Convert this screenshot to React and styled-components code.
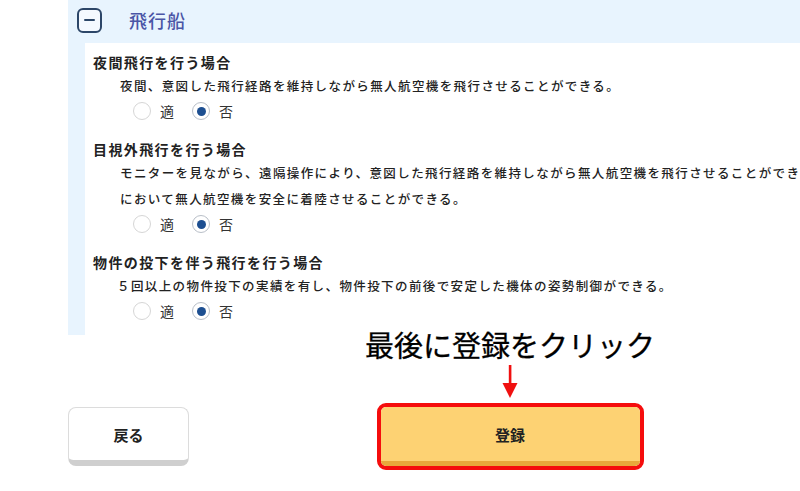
import React from "react";
import styled, { createGlobalStyle } from "styled-components";

const Global = createGlobalStyle`
  html, body {
    margin: 0;
    padding: 0;
    background: #ffffff;
    overflow: hidden;
  }
  body {
    font-family: "Noto Sans CJK JP", "Noto Sans", sans-serif;
    color: #222;
  }
`;

const Page = styled.div`
  width: 800px;
  height: 491px;
  padding-left: 68px;
  box-sizing: border-box;
  overflow: hidden;
`;

const Panel = styled.section`
  background: #e8f4fe;
  width: 732px;
  height: 335px;
  display: flex;
  flex-direction: column;
`;

const PanelHeader = styled.div`
  height: 43px;
  display: flex;
  align-items: center;
  padding-left: 9px;
  padding-bottom: 3px;
  box-sizing: border-box;
  gap: 27px;
  flex-shrink: 0;
`;

const ToggleBox = styled.span`
  width: 25px;
  height: 25px;
  box-sizing: border-box;
  border: 2px solid #2c4668;
  border-radius: 6px;
  display: flex;
  align-items: center;
  justify-content: center;
  background: #f4f9ff;
  &::before {
    content: "";
    width: 11px;
    height: 2.5px;
    border-radius: 1px;
    background: #2c4668;
  }
`;

const PanelTitle = styled.h2`
  margin: 0;
  font-size: 18px;
  font-weight: 500;
  color: #4a55a6;
  letter-spacing: 1px;
`;

const PanelBody = styled.div`
  flex: 1;
  margin-left: 17px;
  background: #ffffff;
  padding: 8px 0 0 8px;
  overflow: hidden;
`;

const Item = styled.div`
  margin-bottom: 15px;
`;

const ItemTitle = styled.div`
  font-size: 14px;
  font-weight: 700;
  line-height: 22px;
  letter-spacing: 1.4px;
  white-space: nowrap;
`;

const ItemText = styled.div`
  font-size: 12.5px;
  font-weight: 500;
  line-height: 26px;
  letter-spacing: 1.4px;
  padding-left: ${(p) => p.$indent || 27}px;
  white-space: nowrap;
`;

const Choices = styled.div`
  display: flex;
  align-items: center;
  height: 24px;
  padding-left: 40px;
  gap: 18px;
`;

const Choice = styled.label`
  display: flex;
  align-items: center;
  gap: 9px;
  font-size: 14px;
  color: #333;
`;

const Radio = styled.span`
  width: 18px;
  height: 18px;
  box-sizing: border-box;
  border-radius: 50%;
  border: 1px solid ${(p) => (p.$on ? "#b9bfc8" : "#d6d6d6")};
  background: #fff;
  display: flex;
  align-items: center;
  justify-content: center;
  &::after {
    content: "";
    display: ${(p) => (p.$on ? "block" : "none")};
    width: 9px;
    height: 9px;
    border-radius: 50%;
    background: #1d4f91;
  }
`;

const Footer = styled.div`
  display: flex;
  align-items: flex-end;
  margin-top: -6px;
`;

const BackButton = styled.button`
  width: 121px;
  height: 59px;
  margin-bottom: 4px;
  box-sizing: border-box;
  background: #fff;
  border: 1px solid #dcdcdc;
  border-bottom: 6px solid #cfcfcf;
  border-radius: 8px;
  font-family: inherit;
  font-size: 15px;
  font-weight: 700;
  color: #222;
  padding: 0;
`;

const Callout = styled.div`
  margin-left: 176px;
  display: flex;
  flex-direction: column;
  align-items: center;
`;

const CalloutText = styled.div`
  font-size: 29px;
  font-weight: 400;
  line-height: 30px;
  color: #000;
  white-space: nowrap;
  -webkit-text-stroke: 0.3px #000;
`;

const Arrow = styled.svg`
  display: block;
  margin-top: 6px;
  margin-bottom: 5px;
`;

const Highlight = styled.div`
  border: 4px solid #f50d0d;
  border-radius: 9px;
`;

const SubmitButton = styled.button`
  width: 259px;
  height: 59px;
  box-sizing: border-box;
  display: block;
  background: #fdd273;
  border: none;
  border-bottom: 5px solid #e8a83b;
  border-radius: 5px;
  font-family: inherit;
  font-size: 15px;
  font-weight: 700;
  color: #222;
  padding: 0;
`;

const items = [
  {
    title: "夜間飛行を行う場合",
    lines: ["夜間、意図した飛行経路を維持しながら無人航空機を飛行させることができる。"],
  },
  {
    title: "目視外飛行を行う場合",
    lines: [
      "モニターを見ながら、遠隔操作により、意図した飛行経路を維持しながら無人航空機を飛行させることができ",
      "において無人航空機を安全に着陸させることができる。",
    ],
  },
  {
    title: "物件の投下を伴う飛行を行う場合",
    lines: ["５回以上の物件投下の実績を有し、物件投下の前後で安定した機体の姿勢制御ができる。"],
    indent: 24,
  },
];

export default function App() {
  return (
    <>
      <Global />
      <Page>
        <Panel>
          <PanelHeader>
            <ToggleBox />
            <PanelTitle>飛行船</PanelTitle>
          </PanelHeader>
          <PanelBody>
            {items.map((it) => (
              <Item key={it.title}>
                <ItemTitle>{it.title}</ItemTitle>
                {it.lines.map((l) => (
                  <ItemText key={l} $indent={it.indent}>
                    {l}
                  </ItemText>
                ))}
                <Choices>
                  <Choice>
                    <Radio />適
                  </Choice>
                  <Choice>
                    <Radio $on />否
                  </Choice>
                </Choices>
              </Item>
            ))}
          </PanelBody>
        </Panel>
        <Footer>
          <BackButton>戻る</BackButton>
          <Callout>
            <CalloutText>最後に登録をクリック</CalloutText>
            <Arrow width="16" height="33" viewBox="0 0 16 33">
              <rect x="6.8" y="0" width="2.6" height="22" fill="#f01010" />
              <path d="M0.5 18 L15.5 18 L8 33 Z" fill="#f01010" />
            </Arrow>
            <Highlight>
              <SubmitButton>登録</SubmitButton>
            </Highlight>
          </Callout>
        </Footer>
      </Page>
    </>
  );
}
